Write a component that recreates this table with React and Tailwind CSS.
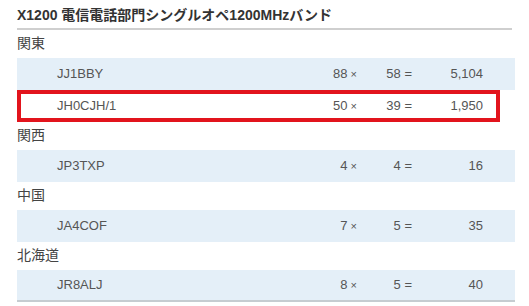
const groups = [
  {
    area: "関東",
    rows: [
      { call: "JJ1BBY", qso: 88, mult: 58, total: "5,104" },
      { call: "JH0CJH/1", qso: 50, mult: 39, total: "1,950", mine: true },
    ],
  },
  { area: "関西", rows: [{ call: "JP3TXP", qso: 4, mult: 4, total: "16" }] },
  { area: "中国", rows: [{ call: "JA4COF", qso: 7, mult: 5, total: "35" }] },
  { area: "北海道", rows: [{ call: "JR8ALJ", qso: 8, mult: 5, total: "40" }] },
];

function Row({ row, last }) {
  let cls = "flex items-center h-[32px] w-[498px] bg-[#e4eff8]";
  if (row.mine) {
    cls =
      "flex items-center h-[32px] w-[483px] bg-white outline-4 outline-[#e2141d] -outline-offset-4";
  }
  if (last) cls += " border-b-2 border-[#c6ccd1]";

  return (
    <div className={cls}>
      <span className="w-[265px] pl-[40px]">{row.call}</span>
      <span className="w-[75px] text-right">
        {row.qso}
        <span className="text-[11px] ml-[3px]">×</span>
      </span>
      <span className="w-[55px] text-right">{row.mult} =</span>
      <span className="w-[71px] text-right">{row.total}</span>
    </div>
  );
}

export default function App() {
  return (
    <div className="bg-white w-[529px] h-[306px] px-[17px] font-['Liberation_Sans','Noto_Sans_CJK_JP',sans-serif] text-[#555] text-[13px]">
      <div className="w-[495px] h-[30px] pt-[5px] border-b-2 border-[#cfcfcf] text-[14px] leading-[20px] font-bold text-[#333]">
        X1200 電信電話部門シングルオペ1200MHzバンド
      </div>
      {groups.map((g, gi) => (
        <div key={g.area}>
          <div className="h-[28px] pt-[3px] text-[14px] leading-[20px] text-[#444]">
            {g.area}
          </div>
          {g.rows.map((r) => (
            <Row key={r.call} row={r} last={gi === groups.length - 1} />
          ))}
        </div>
      ))}
    </div>
  );
}
